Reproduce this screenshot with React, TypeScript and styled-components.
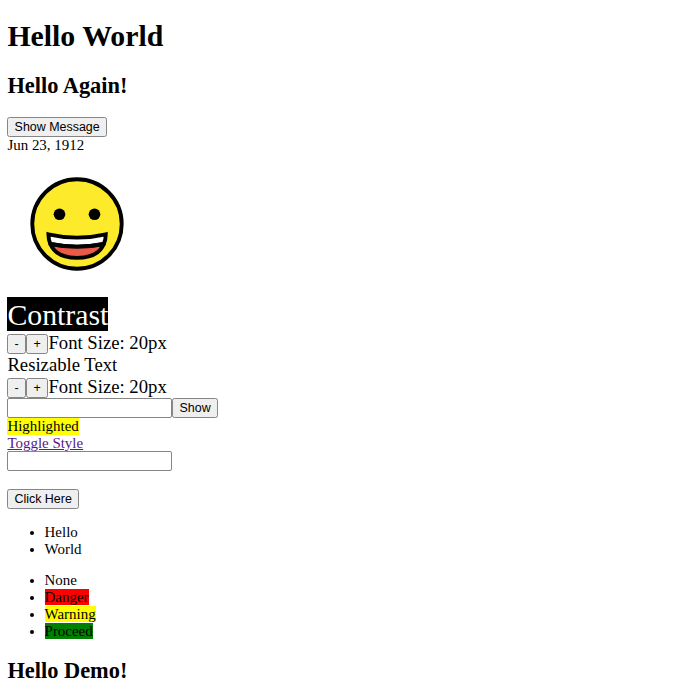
import React from "react";
import styled, { createGlobalStyle } from "styled-components";

const GlobalStyle = createGlobalStyle`
  body {
    margin: 0;
    background: #fff;
    color: #000;
    font-family: "Liberation Serif", "Times New Roman", serif;
    font-size: 14.95px;
  }
`;

const Page = styled.main`
  box-sizing: border-box;
  height: 700px;
  padding: 19px 7.4px 0;
  overflow: hidden;
`;

const Title = styled.h1`
  margin: 0 0 20px;
  font-size: 29.8px;
  line-height: 34px;
`;

const Subtitle = styled.h2`
  margin: 0;
  font-size: 22.4px;
  line-height: 25px;
`;

const Row = styled.div<{ $height: number; $size?: number; $top?: number }>`
  display: flex;
  align-items: flex-start;
  height: ${(p) => p.$height}px;
  margin-top: ${(p) => p.$top ?? 0}px;
  font-size: ${(p) => p.$size ?? 14.95}px;
  line-height: ${(p) => p.$height}px;
  white-space: nowrap;
`;

const Button = styled.button<{ $width: number; $drop?: number }>`
  box-sizing: border-box;
  flex: none;
  width: ${(p) => p.$width}px;
  height: 20px;
  margin: ${(p) => p.$drop ?? 0}px 0 0;
  padding: 1px 0 0;
  border: 1px solid #858585;
  border-radius: 2.5px;
  background: #efefef;
  color: #000;
  font: 12.45px/17px "Liberation Sans", Arial, sans-serif;
`;

const Input = styled.input`
  box-sizing: border-box;
  width: 165px;
  height: 20px;
  margin: 0;
  padding: 1px;
  border: 1px solid #858585;
  border-radius: 2px;
  background: #fff;
`;

const Face = styled.svg`
  display: block;
  width: 140px;
  height: 140px;
  margin-top: 0.6px;
`;

const Contrast = styled.span`
  background: #000;
  color: #fff;
  height: 34px;
  line-height: 36px;
`;

const Mark = styled.span<{ $color: string }>`
  background: ${(p) => p.$color};
`;

const Link = styled.a`
  color: #551a8b;
  text-decoration: underline;
`;

const List = styled.ul<{ $top: number }>`
  margin: ${(p) => p.$top}px 0 0;
  padding: 0 0 0 37.2px;
  line-height: 16.85px;
`;

const FontSizer = ({ top = 0 }: { top?: number }) => (
  <Row $height={22} $size={18.7} $top={top}>
    <Button $width={18.5} $drop={2}>-</Button>
    <Button $width={22.5} $drop={2}>+</Button>
    <span>Font Size: 20px</span>
  </Row>
);

const Grin = () => (
  <Face viewBox="0 0 72 72" role="img" aria-label="Grinning face">
    <circle cx="36" cy="36" r="23" fill="#fcea2b" />
    <path fill="#fff" d="M21.3 41.3Q36 44.7 50.8 41.3Q50.8 43.9 49.8 46.3Q36 49 22.3 46.3Q21.3 43.9 21.3 41.3z" />
    <path fill="#ea5a47" d="M49.8 46.3C48 50.6 43.4 53.4 36 53.4C28.7 53.4 24.1 50.6 22.3 46.3Q36 49 49.8 46.3z" />
    <g fill="none" stroke="#000" strokeWidth="2" strokeLinecap="round" strokeLinejoin="miter">
      <circle cx="36" cy="36" r="23" />
      <path d="M21.3 41.3Q36 44.7 50.8 41.3Q50.8 43.9 49.8 46.3Q36 49 22.3 46.3Q21.3 43.9 21.3 41.3z" />
      <path strokeLinejoin="round" d="M49.8 46.3C48 50.6 43.4 53.4 36 53.4C28.7 53.4 24.1 50.6 22.3 46.3Q36 49 49.8 46.3z" />
    </g>
    <circle cx="27" cy="31" r="3" />
    <circle cx="45" cy="31" r="3" />
  </Face>
);

export default function App() {
  return (
    <>
      <GlobalStyle />
      <Page>
        <Title>Hello World</Title>
        <Subtitle>Hello Again!</Subtitle>
        <Row $height={20} $top={19}>
          <Button $width={99.5}>Show Message</Button>
        </Row>
        <Row $height={16.4}>Jun 23, 1912</Row>
        <Grin />
        <Row $height={34} $size={29.8} $top={3}>
          <Contrast>Contrast</Contrast>
        </Row>
        <FontSizer top={1} />
        <Row $height={22} $size={18.7}>Resizable Text</Row>
        <FontSizer />
        <Row $height={20}>
          <Input aria-label="Message" />
          <Button $width={45.5}>Show</Button>
        </Row>
        <Row $height={17}>
          <Mark $color="#ff0">Highlighted</Mark>
        </Row>
        <Row $height={16.5}>
          <Link href="#">Toggle Style</Link>
        </Row>
        <Row $height={19.5}>
          <Input aria-label="Text" />
        </Row>
        <Row $height={19.5} $top={18}>
          <Button $width={71.5}>Click Here</Button>
        </Row>
        <List $top={15.5}>
          <li>Hello</li>
          <li>World</li>
        </List>
        <List $top={14.8}>
          <li>None</li>
          <li><Mark $color="#f00">Danger</Mark></li>
          <li><Mark $color="#ff0">Warning</Mark></li>
          <li><Mark $color="#008000">Proceed</Mark></li>
        </List>
        <Row $height={17.7}>{null}</Row>
        <Subtitle>Hello Demo!</Subtitle>
      </Page>
    </>
  );
}
